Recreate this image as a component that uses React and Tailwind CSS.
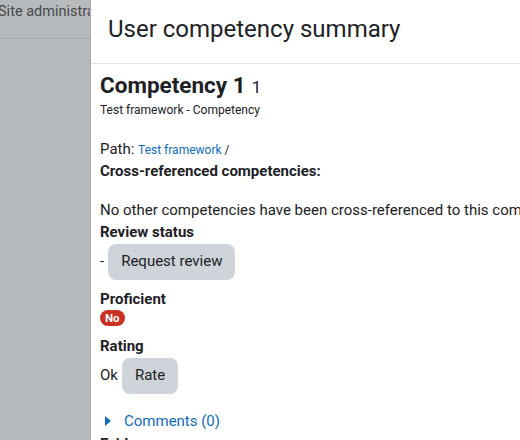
export default function App() {
  return (
    <div className="relative w-[520px] h-[440px] overflow-hidden bg-[#b7babc] font-['Roboto',sans-serif] text-[#1d2125]">
      {/* page behind the backdrop */}
      <div className="h-[39px] border-b border-[#a7aaac]">
        <div className="-ml-[2px] pt-[1px] text-[14.5px] leading-[22px] text-[#47494b] whitespace-nowrap">Site administration</div>
      </div>

      {/* modal */}
      <div className="absolute left-[90px] top-0 w-[720px] h-[440px] bg-white border-l border-[#a9acae]">
        <div className="h-[64px] flex items-center pl-[17px] border-b border-[#dee2e6]">
          <h5 className="text-[24px] leading-[28px] text-[#1d2125] pb-[6px]">User competency summary</h5>
        </div>

        <div className="pl-[9px] pt-[8px] text-[15px] leading-[22.5px]">
          <div className="flex items-baseline gap-[6px]">
            <span className="text-[22.5px] leading-[27px] font-bold">Competency 1</span>
            <span className="text-[17px]">1</span>
          </div>
          <div className="text-[12px] leading-[19px] mt-[2px]">Test framework - Competency</div>

          <div className="mt-[18px] h-[22px] flex items-baseline whitespace-pre">
            <span>Path: </span>
            <a className="text-[12px] leading-[22px] text-[#0f6cbf]">Test framework</a>
            <span className="text-[12px] leading-[22px]"> /</span>
          </div>
          <div className="font-bold">Cross-referenced competencies:</div>
          <div className="mt-[16px] whitespace-nowrap">
            No other competencies have been cross-referenced to this competency.
          </div>

          <div className="font-bold">Review status</div>
          <div className="flex items-center">
            <span>-</span>
            <button className="ml-[4px] h-[36px] px-[13px] rounded-[8px] bg-[#ced4da] text-[15px] text-[#1d2125]">
              Request review
            </button>
          </div>

          <div className="font-bold mt-[8px]">Proficient</div>
          <div className="flex">
            <span className="h-[16px] px-[5px] rounded-full bg-[#ca3120] text-white text-[11.5px] leading-[16px] font-bold">
              No
            </span>
          </div>

          <div className="font-bold mt-[9px]">Rating</div>
          <div className="flex items-center">
            <span>Ok</span>
            <button className="ml-[4px] h-[36px] px-[13px] rounded-[8px] bg-[#ced4da] text-[15px] text-[#1d2125]">
              Rate
            </button>
          </div>

          <div className="mt-[16px] flex items-center text-[#0f6cbf]">
            <svg width="8" height="10" viewBox="0 0 8 10" className="ml-[4px] mr-[12px]">
              <path d="M1 0 L7 5 L1 10 Z" fill="#0f6cbf" />
            </svg>
            <span>Comments (0)</span>
          </div>
          <div className="font-bold mt-[1px]">Evidence</div>
        </div>
      </div>
    </div>
  )
}
